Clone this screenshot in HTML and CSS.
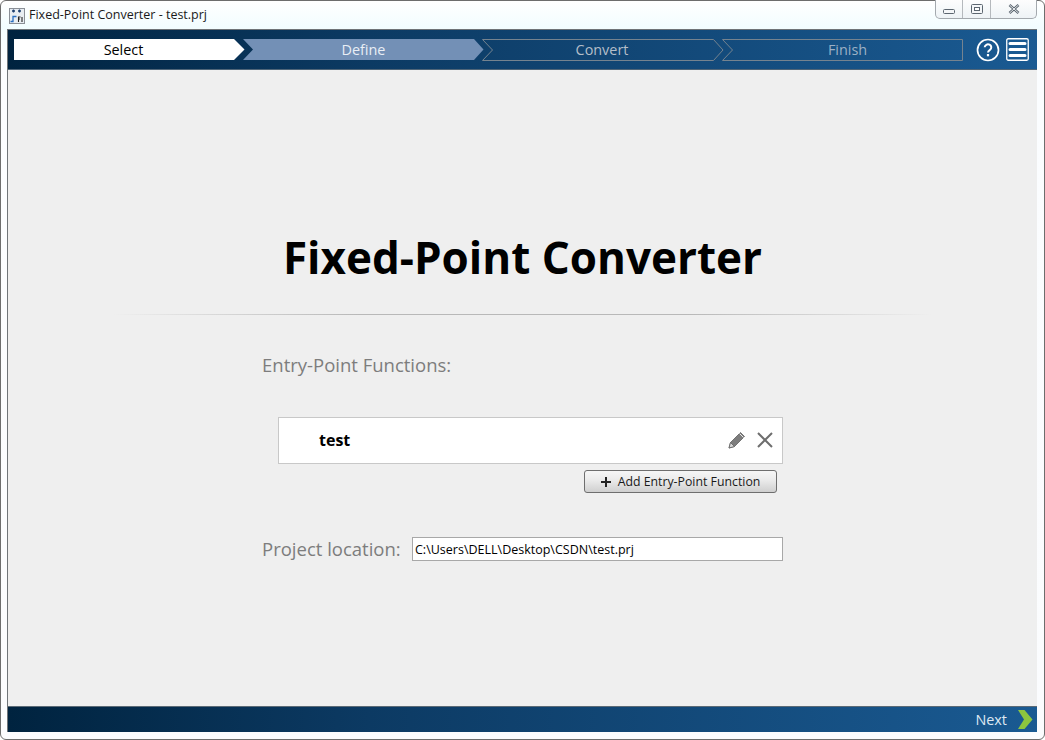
FILE: index.html
```html
<!DOCTYPE html>
<html lang="en">
<head>
<meta charset="utf-8">
<title>Fixed-Point Converter - test.prj</title>
<link rel="stylesheet" href="styles.css">
</head>
<body>
<div class="window">
  <div class="titlebar">
    <svg class="app-icon" width="16" height="16" viewBox="0 0 16 16">
      <rect x="0.5" y="0.5" width="15" height="15" fill="#e8edf2" stroke="#8a8f96"/>
      <path d="M3 3h3M4.5 1.5v3M9 3h3M10.500 1.500v3" stroke="#1d3f6e" stroke-width="1.300" fill="none"/>
      <path d="M1.500 13.500h2.500v-5h3.500" stroke="#2a6fc0" stroke-width="1.300" fill="none"/>
      <path d="M9.500 14v-5h2M9.500 11h1.500M13 9v5" stroke="#222" stroke-width="1.100" fill="none"/>
    </svg>
    <span class="window-title">Fixed-Point Converter - test.prj</span>
    <div class="controls">
      <div class="ctl ctl-min"><svg width="12" height="6" viewBox="0 0 12 6"><rect x="0.500" y="0.500" width="11" height="4" fill="#f4f6f8" stroke="#5c6670" rx="1"/></svg></div>
      <div class="ctl ctl-max"><svg width="12" height="10" viewBox="0 0 12 10"><rect x="0.500" y="0.500" width="11" height="9" fill="#f4f6f8" stroke="#5c6670" rx="1"/><rect x="3.500" y="3.500" width="5" height="3" fill="#fff" stroke="#5c6670"/></svg></div>
      <div class="ctl ctl-close"><svg width="12" height="10" viewBox="0 0 12 10"><path d="M1.500 1l9 8M10.500 1l-9 8" stroke="#5c6670" stroke-width="2.600" fill="none"/><path d="M1.500 1l9 8M10.500 1l-9 8" stroke="#e8ebee" stroke-width="1" fill="none"/></svg></div>
    </div>
  </div>
  <div class="app">
    <header class="toolbar">
      <nav class="steps">
        <div class="step step-select">
          <svg class="step-bg" width="231" height="21" viewBox="0 0 231 21"><path d="M0 0H220L230.500 10.500L220 21H0Z" fill="#fff"/></svg>
          <span>Select</span>
        </div>
        <div class="step step-define">
          <svg class="step-bg" width="241" height="21" viewBox="0 0 241 21"><path d="M0 0H231L240.500 10.500L231 21H0L10 10.500Z" fill="#7390b6"/></svg>
          <span>Define</span>
        </div>
        <div class="step step-convert">
          <svg class="step-bg" width="242" height="22" viewBox="0 0 242 22"><path d="M.5.500H231.500L241 11L231.500 21.500H.5L10.500 11Z" fill="none" stroke="#75838f"/></svg>
          <span>Convert</span>
        </div>
        <div class="step step-finish">
          <svg class="step-bg" width="241" height="22" viewBox="0 0 241 22"><path d="M.5.500H240.500V21.500H.5L10.500 11Z" fill="none" stroke="#75838f"/></svg>
          <span>Finish</span>
        </div>
      </nav>
      <svg class="help" width="24" height="24" viewBox="0 0 24 24">
        <circle cx="12" cy="12" r="10.500" fill="none" stroke="#fff" stroke-width="1.700"/>
        <path d="M8.700 9.300a3.300 3 0 1 1 5.200 2.500c-1.200.8-1.900 1.300-1.900 2.700" fill="none" stroke="#fff" stroke-width="2"/>
        <rect x="10.900" y="16" width="2.200" height="2.300" fill="#fff"/>
      </svg>
      <svg class="menu" width="23" height="23" viewBox="0 0 23 23">
        <rect x="0.750" y="0.750" width="21.500" height="21.500" rx="1.500" fill="none" stroke="#fff" stroke-width="1.300"/>
        <path d="M4 5.500H19M4 11.500H19M4 17.500H19" stroke="#fff" stroke-width="3" stroke-linecap="round"/>
      </svg>
    </header>
    <main class="content">
      <h1 class="heading">Fixed-Point Converter</h1>
      <div class="rule"></div>
      <section class="form">
        <h2 class="label entry-label">Entry-Point Functions:</h2>
        <div class="entry-box">
          <span class="entry-name">test</span>
          <svg class="pencil" width="18" height="18" viewBox="0 0 18 18">
            <path d="M1 17L2.500 11.500L12.500 1.500L16.500 5.500L6.500 15.500Z" fill="#7d7d7d" stroke="#5f5f5f" stroke-width="0.800"/>
            <path d="M2.500 11.500L6.500 15.500L1 17Z" fill="#d8d8d8" stroke="#5f5f5f" stroke-width="0.800"/>
            <path d="M11.500 2.500L15.500 6.500" stroke="#eee" stroke-width="1"/>
          </svg>
          <svg class="remove" width="16" height="16" viewBox="0 0 16 16"><path d="M1 1L15 15M15 1L1 15" stroke="#6e6e6e" stroke-width="2"/></svg>
        </div>
        <div class="add-row">
          <button class="add-btn" type="button">
            <svg width="10" height="10" viewBox="0 0 10 10"><path d="M5 0V10M0 5H10" stroke="#222" stroke-width="2"/></svg>
            <span>Add Entry-Point Function</span>
          </button>
        </div>
        <div class="location-row">
          <span class="label">Project location:</span>
          <input class="location" type="text" value="C:\Users\DELL\Desktop\CSDN\test.prj">
        </div>
      </section>
    </main>
    <footer class="footer">
      <span class="next">Next</span>
      <svg width="15" height="19" viewBox="0 0 15 19"><path d="M0 0H6.500L14.500 9.500L6.500 19H0L6 9.500Z" fill="#8cc63f"/></svg>
    </footer>
  </div>
</div>
</body>
</html>
```
FILE: styles.css
```css
* { box-sizing: border-box; }
html, body { margin: 0; padding: 0; }
body { width: 1045px; height: 740px; overflow: hidden; background: #fff; font-family: "Open Sans", "Noto Sans", sans-serif; }
.window {
  width: 1045px; height: 740px; padding: 0 7px 7px 6px;
  border: 1px solid #6d6d6d; border-radius: 6px;
  background: linear-gradient(180deg, #fff 0, #f2fdff 26px, #fbfdff 60px, #fbfcfe 100%);
  display: flex; flex-direction: column;
}
.titlebar { height: 28px; flex: none; display: flex; align-items: flex-start; }
.app-icon { margin: 7px 0 0 2px; flex: none; }
.window-title { margin: 6px 0 0 4px; font: 12.500px/16px "Open Sans", sans-serif; color: #1a1a1a; }
.controls { margin-left: auto; display: flex; width: 102px; height: 19px; margin-top: -1px; border: 1px solid #a4a9ae; border-top: 0; border-radius: 0 0 5px 5px; background: linear-gradient(#fdfdfd, #eef3f6); }
.ctl { display: flex; align-items: center; justify-content: center; border-right: 1px solid #b5b9bd; }
.ctl-min { width: 27px; padding-top: 5px; }
.ctl-max { width: 28px; }
.ctl-close { flex: 1; border-right: 0; }
.app { flex: 1; display: flex; flex-direction: column; border: 1px solid #6f7478; border-width: 1px 0 0 1px; min-height: 0; }
.toolbar {
  height: 40px; flex: none; display: flex; align-items: center; padding: 0 7px 0 6px;
  background: linear-gradient(90deg, #00233f 0, #0c3a63 35%, #1a5a92 100%);
  border-bottom: 1px solid #4f6578;
}
.steps { display: flex; flex: none; align-items: center; }
.step { position: relative; display: flex; align-items: center; justify-content: center; font-size: 14.400px; line-height: 21px; height: 22px; }
.step span { position: relative; }
.step-bg { position: absolute; left: 0; top: 0; }
.step-select { width: 229px; color: #000; }
.step-select span { left: -5px; }
.step-define { width: 239px; color: #e9eef5; }
.step-define span { left: 1px; }
.step-convert { width: 240px; color: #b4bec9; }
.step-finish { width: 241px; color: #9db0c4; }
.step-finish span { left: 5px; }
.help { margin-left: 13px; flex: none; }
.menu { margin-left: 6px; flex: none; }
.content { flex: 1; background: #efefef; display: flex; flex-direction: column; align-items: center; min-height: 0; }
.heading { margin: 159px 0 0; font-size: 44px; line-height: 56px; font-weight: 700; color: #000; text-align: center; }
.rule { width: 820px; height: 1px; margin-top: 29px; background: linear-gradient(90deg, rgba(180,180,180,0), #b8b8b8 30%, #b8b8b8 70%, rgba(180,180,180,0)); }
.form { width: 521px; margin-top: 36px; }
.label { font-size: 18.500px; line-height: 28px; font-weight: 400; color: #7d7d7d; margin: 0; }
.entry-label { height: 28px; }
.entry-box { margin: 38px 0 0 16px; width: 505px; height: 47px; background: #fff; border: 1px solid #c8c8c8; display: flex; align-items: center; padding: 0 9px 2px 40px; }
.entry-name { font-size: 16px; font-weight: 700; color: #000; flex: 1; }
.pencil { margin-right: 11px; }
.add-row { display: flex; justify-content: flex-end; margin: 6px 6px 0 0; }
.add-btn { width: 193px; height: 23px; display: flex; align-items: center; justify-content: center; gap: 7px; padding: 0; font: 12.300px "Open Sans", sans-serif; color: #1a1a1a; border: 1px solid #6e6e6e; border-radius: 3px; background: linear-gradient(#f6f6f6, #eaeaea 45%, #cfcfcf); }
.location-row { display: flex; align-items: center; justify-content: space-between; margin-top: 44px; height: 24px; }
.location { width: 371px; height: 24px; padding: 0 2px; border: 1px solid #a8a8a8; background: #fff; font: 12.500px "Open Sans", sans-serif; color: #000; }
.footer { height: 26px; flex: none; display: flex; align-items: center; justify-content: flex-end; padding: 0 4px 0 0; gap: 11px; background: linear-gradient(90deg, #00233f 0, #0c3a63 35%, #1a5a92 100%); border-top: 1px solid #5b6a76; }
.next { color: #dfe9f3; font-size: 14.400px; }
```
